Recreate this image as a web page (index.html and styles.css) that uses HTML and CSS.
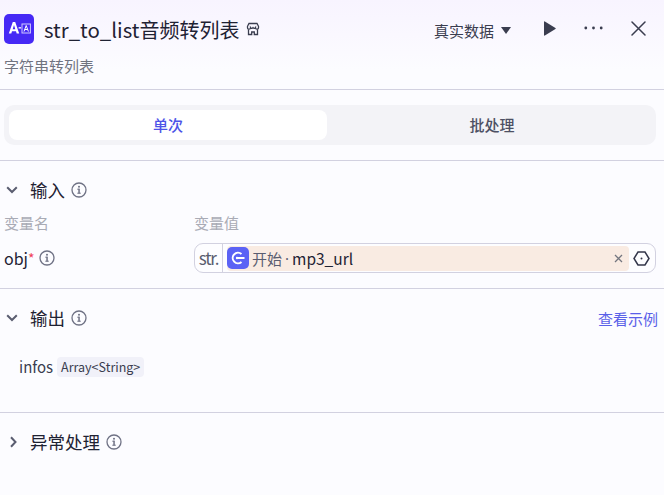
FILE: index.html
```
<!DOCTYPE html>
<html lang="zh">
<head>
<meta charset="utf-8">
<title>str_to_list</title>
<link rel="stylesheet" href="styles.css">
</head>
<body>
<div class="panel">
  <header class="header">
    <div class="title-row">
      <div class="logo">
        <svg width="30" height="30" viewBox="0 0 30 30"><rect width="30" height="30" rx="5" fill="#4629f5"/><path d="M4.800 19.500 8.800 8h2.400l4 11.500h-2.500l-.7-2.300H8l-.7 2.300zM8.700 15.200h2.600L10 11z" fill="#fff"/><rect x="14.600" y="13.200" width="2.500" height="1.300" fill="#fff"/><rect x="18" y="10" width="8.400" height="9" fill="none" stroke="#cfcaff" stroke-width="1"/><path d="M20 17.500l2.200-6 2.200 6M20.800 15.500h2.800" fill="none" stroke="#fff" stroke-width="1"/></svg>
      </div>
      <h1 class="title"><span class="title-latin">str_to_list</span>音频转列表</h1>
      <svg class="store" width="14" height="14" viewBox="0 0 14 14" fill="none" stroke="#3a3d4f" stroke-width="1.300"><path d="M3 1.500h8l1.500 2.800v1.400a1.500 1.500 0 0 1-3 0 1.500 1.500 0 0 1-2.500 0 1.500 1.500 0 0 1-2.500 0 1.500 1.500 0 0 1-3 0V4.300z"/><path d="M2.500 7.500v5h3.200v-2.500h2.600v2.500h3.200v-5"/></svg>
      <div class="spacer"></div>
      <div class="data-select">真实数据<span class="caret"></span></div>
      <svg class="play" width="13" height="15" viewBox="0 0 13 15"><path d="M1 1v13a.6.6 0 0 0 .9.500L12.400 8a.6.6 0 0 0 0-1L1.900.500A.6.6 0 0 0 1 1z" fill="#3a3d4f"/></svg>
      <svg class="more" width="19" height="4" viewBox="0 0 19 4" fill="#3a3d4f"><circle cx="1.800" cy="2" r="1.400"/><circle cx="9.500" cy="2" r="1.400"/><circle cx="17.200" cy="2" r="1.400"/></svg>
      <svg class="close" width="15" height="15" viewBox="0 0 15 15" stroke="#3a3d4f" stroke-width="1.500" stroke-linecap="round"><path d="M1 1l13 13M14 1 1 14"/></svg>
    </div>
    <p class="subtitle">字符串转列表</p>
  </header>

  <div class="tabs-wrap">
    <div class="tabs">
      <div class="tab tab-active">单次</div>
      <div class="tab tab-batch">批处理</div>
    </div>
  </div>

  <section class="section section-input">
    <div class="section-head">
      <svg class="chev" width="12" height="8" viewBox="0 0 12 8" fill="none" stroke="#5a5d70" stroke-width="2"><path d="M1.200 1.300 6 6l4.800-4.700"/></svg>
      <span class="section-title">输入</span>
      <svg class="info" width="16" height="16" viewBox="0 0 16 16"><use href="#i"/></svg>
    </div>
    <div class="var-grid">
      <span class="col-label">变量名</span>
      <span class="col-label">变量值</span>
      <div class="var-name">obj<span class="req">*</span>
        <svg class="info" width="16" height="16" viewBox="0 0 16 16"><use href="#i"/></svg>
      </div>
      <div class="var-input">
        <span class="type">str.</span>
        <div class="tag">
          <span class="tag-icon"><svg width="20" height="20" viewBox="0 0 20 20" fill="none" stroke="#fff" stroke-width="2"><path d="M13.500 6a5.300 5.300 0 1 0 0 8"/><path d="M9 10h7.500"/><circle cx="9" cy="10" r="1.200" fill="#fff" stroke="none"/></svg></span>
          <span class="tag-source">开始</span><span class="tag-dot">·</span>
          <span class="tag-name">mp3_url</span>
          <svg class="tag-x" width="9" height="9" viewBox="0 0 9 9" stroke="#74767f" stroke-width="1.300"><path d="M1 1l7 7M8 1 1 8"/></svg>
        </div>
        <svg class="hex" width="17" height="17" viewBox="0 0 17 17" fill="none" stroke="#33364a" stroke-width="1.500"><path d="M5 2h7l4 6.500L12 15H5L1 8.500z"/><circle cx="8.500" cy="8.500" r="1" fill="#33364a" stroke="none"/></svg>
      </div>
    </div>
  </section>

  <section class="section section-output">
    <div class="section-head">
      <svg class="chev" width="12" height="8" viewBox="0 0 12 8" fill="none" stroke="#5a5d70" stroke-width="2"><path d="M1.200 1.300 6 6l4.800-4.700"/></svg>
      <span class="section-title">输出</span>
      <svg class="info" width="16" height="16" viewBox="0 0 16 16"><use href="#i"/></svg>
      <span class="spacer"></span>
      <a class="example">查看示例</a>
    </div>
    <div class="output-row">
      <span class="out-name">infos</span>
      <span class="out-type">Array&lt;String&gt;</span>
    </div>
  </section>

  <section class="section section-error">
    <div class="section-head">
      <svg class="chev chev-right" width="8" height="12" viewBox="0 0 8 12" fill="none" stroke="#5a5d70" stroke-width="2"><path d="M1.500 1.200 6 6l-4.500 4.800"/></svg>
      <span class="section-title">异常处理</span>
      <svg class="info" width="16" height="16" viewBox="0 0 16 16"><use href="#i"/></svg>
    </div>
  </section>
</div>
<svg class="defs" width="0" height="0"><defs><g id="i"><circle cx="8" cy="8" r="7" fill="none" stroke="#6f7285" stroke-width="1.300"/><rect x="7.300" y="6.700" width="1.500" height="4.800" fill="#6f7285"/><rect x="6.300" y="10.700" width="3.500" height="1" fill="#6f7285"/><rect x="6.300" y="6.700" width="2" height="1" fill="#6f7285"/><circle cx="8" cy="4.700" r="1" fill="#6f7285"/></g></defs></svg>
</body>
</html>
```
FILE: styles.css
```
* { box-sizing: border-box; }
html, body { margin: 0; padding: 0; }
body {
  width: 664px;
  height: 495px;
  overflow: hidden;
  background: #fcfcff;
  font-family: "Noto Sans CJK SC", "Noto Sans", sans-serif;
  color: #1f2233;
}
.panel {
  height: 495px;
  background: linear-gradient(180deg, #f8f4ff 0, #fcfcff 70px);
}
.defs { position: absolute; }
.spacer { flex: 1; }

.header {
  height: 90px;
  padding: 14px 0 0 4px;
  border-bottom: 1px solid #d2d1e0;
}
.title-row { display: flex; align-items: center; height: 30px; }
.logo { width: 30px; height: 30px; }
.logo svg { display: block; }
.title {
  margin: 0 0 0 10px;
  font-size: 20px;
  font-weight: 400;
  line-height: 30px;
  color: #1f2233;
}
.title-latin { font-size: 20.400px; }
.store { margin-left: 7px; }
.data-select {
  display: flex;
  align-items: center;
  font-size: 15px;
  font-weight: 400;
  color: #3a3d4f;
  margin-top: 2px;
}
.caret {
  width: 0;
  height: 0;
  margin-left: 7px;
  border-left: 5px solid transparent;
  border-right: 5px solid transparent;
  border-top: 7px solid #3a3d4f;
}
.play { margin: -2px 0 0 32px; }
.more { margin: -2px 0 0 28px; }
.close { margin: -2px 18px 0 28px; }
.subtitle {
  margin: 11px 0 0;
  font-size: 15px;
  line-height: 22px;
  color: #70737f;
}

.tabs-wrap { padding: 15px 8px 15px 4px; border-bottom: 1px solid #d2d1e0; height: 71px; }
.tabs {
  display: flex;
  height: 40px;
  padding: 5px;
  background: #f3f3f7;
  border-radius: 10px;
}
.tab {
  height: 30px;
  line-height: 29px;
  text-align: center;
  font-size: 15px;
  font-weight: 500;
  color: #4d5063;
  border-radius: 8px;
}
.tab-active { width: 318px; background: #fff; color: #4d53e8; }
.tab-batch { flex: 1; padding-left: 6px; }

.section { border-bottom: 1px solid #d2d1e0; padding-left: 6px; }
.section-input { height: 128px; padding-top: 18px; }
.section-output { height: 124px; padding-top: 18px; }
.section-error { border-bottom: 0; padding-top: 18px; }
.section-head { display: flex; align-items: center; height: 22px; padding-right: 6px; }
.chev { width: 12px; flex: none; }
.chev-right { margin-left: 3px; width: 9px; }
.section-title {
  margin-left: 12px;
  font-size: 17.500px;
  font-weight: 400;
  line-height: 22px;
  margin-top: -1px;
  color: #1f2233;
}
.section-head .info { margin-left: 6px; }
.example { font-size: 15px; color: #5a60e8; }

.var-grid {
  display: grid;
  grid-template-columns: 190px 462px;
  grid-template-rows: 22px 30px;
  row-gap: 9px;
  margin: 11px 0 0 -2px;
  align-items: center;
}
.col-label { font-size: 15px; color: #a9abb5; line-height: 22px; }
.var-name { display: flex; align-items: center; font-size: 16px; color: #1f2233; }
.req { color: #f0405a; font-size: 14px; }
.var-name .info { margin-left: 4px; }
.var-input {
  display: flex;
  align-items: center;
  height: 30px;
  border: 1px solid #d2d1e0;
  border-radius: 9px;
  background: #fdfdff;
}
.type {
  width: 28px;
  height: 28px;
  line-height: 27px;
  text-align: center;
  font-size: 17px;
  letter-spacing: -1.200px;
  color: #5a5d70;
  border-right: 1px solid #d2d1e0;
  flex: none;
}
.tag {
  flex: 1;
  display: flex;
  align-items: center;
  height: 25px;
  margin-left: 4px;
  padding-right: 6px;
  background: #f9ebe2;
  border-radius: 4px;
  font-size: 15px;
}
.tag-icon {
  width: 22px;
  height: 22px;
  border-radius: 5px;
  background: #5b62f5;
  display: flex;
  align-items: center;
  justify-content: center;
}
.tag-source { margin-left: 3px; color: #5a5d70; }
.tag-dot { font-family: "Noto Sans", sans-serif; margin-left: 3px; color: #5a5d70; }
.tag-name { margin-left: 3px; font-weight: 400; font-size: 15.500px; color: #1f2233; }
.tag-x { margin-left: auto; }
.hex { margin: 0 5px 0 4px; flex: none; }

.output-row { display: flex; align-items: center; margin: 27px 0 0 13px; }
.out-name { font-size: 15px; color: #3a3d4f; }
.out-type {
  margin-left: 4px;
  height: 20px;
  line-height: 20px;
  padding: 0 4px;
  border-radius: 4px;
  background: #f1f1f9;
  font-size: 12.500px;
  color: #3a3d4f;
}
```
